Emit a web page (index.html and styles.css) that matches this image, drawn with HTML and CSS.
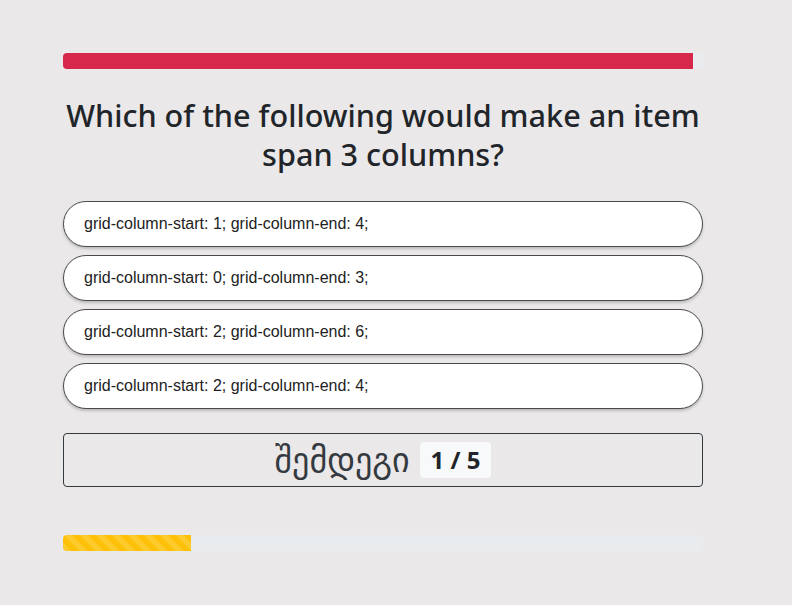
FILE: index.html
```html
<!DOCTYPE html>
<html>
<head>
<meta charset="utf-8">
<link rel="stylesheet" href="styles.css">
</head>
<body>
<div class="quiz">
  <div class="progress top"><div class="bar red" style="width:98.4%"></div></div>
  <h1 class="question">Which of the following would make an item span 3 columns?</h1>
  <div class="answers">
    <button class="answer">grid-column-start: 1; grid-column-end: 4;</button>
    <button class="answer">grid-column-start: 0; grid-column-end: 3;</button>
    <button class="answer">grid-column-start: 2; grid-column-end: 6;</button>
    <button class="answer">grid-column-start: 2; grid-column-end: 4;</button>
  </div>
  <button class="next">შემდეგი <span class="badge">1 / 5</span></button>
  <div class="progress bottom"><div class="bar yellow" style="width:20%"></div></div>
</div>
</body>
</html>
```
FILE: styles.css
```css
html, body {
  margin: 0;
  padding: 0;
  background: #ebe8e9;
}
body {
  font-family: "Noto Sans", "DejaVu Sans", sans-serif;
  color: #212529;
}
.quiz {
  width: 640px;
  margin-left: 63px;
  padding-top: 53px;
  display: flex;
  flex-direction: column;
}
.progress {
  height: 16px;
  background: #e9ecef;
  border-radius: 4px;
  overflow: hidden;
  display: flex;
}
.bar { height: 100%; }
.red { background: #d7274a; }
.yellow {
  background-color: #ffc107;
  background-image: linear-gradient(45deg, rgba(255,255,255,.15) 25%, transparent 25%, transparent 50%, rgba(255,255,255,.15) 50%, rgba(255,255,255,.15) 75%, transparent 75%, transparent);
  background-size: 16px 16px;
}
.question {
  margin: 27px 0 0;
  font-size: 30.6px;
  font-weight: 500;
  line-height: 39px;
  text-align: center;
  color: #212529;
}
.answers {
  margin-top: 27px;
  display: flex;
  flex-direction: column;
  gap: 8px;
}
.answer {
  height: 46px;
  width: 100%;
  text-align: left;
  padding: 0 0 0 20px;
  background: #fff;
  border: 1px solid #4a4a4a;
  border-radius: 23px;
  box-shadow: 0 2px 3px rgba(0,0,0,.2);
  font-family: "Liberation Sans", Arial, sans-serif;
  font-size: 16px;
  color: #222;
}
.next {
  margin-top: 24px;
  height: 54px;
  width: 100%;
  background: transparent;
  border: 1px solid #343a40;
  border-radius: 4px;
  font-family: "DejaVu Sans", sans-serif;
  font-size: 34px;
  color: #343a40;
  display: flex;
  align-items: center;
  justify-content: center;
  gap: 10px;
  padding: 0;
}
.badge {
  background: #f8f9fa;
  color: #212529;
  font-family: "Noto Sans", sans-serif;
  font-weight: 700;
  font-size: 24px;
  border-radius: 4px;
  padding: 0 11px;
  height: 36px;
  line-height: 36px;
}
.bottom {
  margin-top: 48px;
}
```
